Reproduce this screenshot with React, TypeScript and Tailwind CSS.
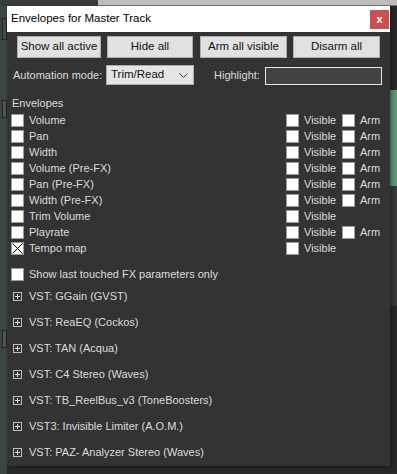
const font = { fontFamily: '"Liberation Sans", Arial, sans-serif' };

const envelopes = [
  { name: "Volume", arm: true },
  { name: "Pan", arm: true },
  { name: "Width", arm: true },
  { name: "Volume (Pre-FX)", arm: true },
  { name: "Pan (Pre-FX)", arm: true },
  { name: "Width (Pre-FX)", arm: true },
  { name: "Trim Volume", arm: false },
  { name: "Playrate", arm: true },
  { name: "Tempo map", arm: false, checked: true },
];

const plugins = [
  "VST: GGain (GVST)",
  "VST: ReaEQ (Cockos)",
  "VST: TAN (Acqua)",
  "VST: C4 Stereo (Waves)",
  "VST: TB_ReelBus_v3 (ToneBoosters)",
  "VST3: Invisible Limiter (A.O.M.)",
  "VST: PAZ- Analyzer Stereo (Waves)",
];

const Check = ({ checked = false }: { checked?: boolean }) => (
  <div className="w-[13px] h-[13px] shrink-0 bg-white border border-[#9a9a9a] flex items-center justify-center">
    {checked && (
      <svg width="11" height="11" viewBox="0 0 11 11">
        <path d="M0.5 0.5 L10.5 10.5 M10.5 0.5 L0.5 10.5" stroke="#000" strokeWidth="1" />
      </svg>
    )}
  </div>
);

const Button = ({ label, w }: { label: string; w: string }) => (
  <button className={`${w} h-[22px] shrink-0 whitespace-nowrap bg-[#e1e1e1] border border-[#adadad] text-[11.5px] text-[#111] flex items-center justify-center`}>
    {label}
  </button>
);

const App = () => {
  return (
    <div className="w-[397px] h-[474px] bg-[#2a2a2a] relative overflow-hidden" style={font}>
      {/* desktop behind the dialog */}
      <div className="absolute left-0 top-0 w-[397px] h-[6px] bg-[#bdbdbd] border-b border-[#777]" />
      <div className="absolute left-0 top-0 w-[98px] h-[6px] bg-[#3a3a3a]" />
      <div className="absolute left-0 top-[6px] w-[7px] h-[468px] bg-[#3c4640]" />
      <div className="absolute left-[2px] top-[18px] w-[5px] h-[22px] bg-[#4a4a4a] border border-[#222]" />
      <div className="absolute left-[2px] top-[100px] w-[5px] h-[18px] bg-[#555] border border-[#222]" />
      <div className="absolute left-[2px] top-[330px] w-[5px] h-[18px] bg-[#555] border border-[#222]" />
      <div className="absolute left-[390px] top-[90px] w-[7px] h-[96px] bg-[#5b9c74]" />
      <div className="absolute left-[390px] top-[186px] w-[7px] h-[120px] bg-[#3a3a3a]" />

      <div className="absolute left-[7px] top-[6px] w-[383px] h-[460px] flex flex-col shadow-[2px_2px_4px_rgba(0,0,0,0.4)]">
        {/* title bar */}
        <div className="h-[26px] bg-white flex items-center justify-between pl-[4px] pr-[1px]">
          <span className="text-[11.5px] text-black">Envelopes for Master Track</span>
          <div className="w-[19px] h-[19px] bg-[#c75050] flex items-center justify-center text-white text-[11px] font-bold leading-none">
            x
          </div>
        </div>

        {/* body */}
        <div className="flex-1 bg-[#333333] flex flex-col text-[11px] text-[#dcdcdc] whitespace-nowrap">
          <div className="flex pl-[10px] pt-[4px] gap-[6px]">
            <Button label="Show all active" w="w-[84px]" />
            <Button label="Hide all" w="w-[86px]" />
            <Button label="Arm all visible" w="w-[87px] ml-[1px]" />
            <Button label="Disarm all" w="w-[87px]" />
          </div>

          <div className="flex items-center h-[20px] mt-[7px]">
            <span className="pl-[6px] w-[99px] shrink-0">Automation mode:</span>
            <div className="w-[88px] h-[20px] shrink-0 bg-[#e5e5e5] border border-[#acacac] flex items-center justify-between pl-[4px] pr-[5px] text-[11.5px] text-[#111]">
              <span>Trim/Read</span>
              <svg width="9" height="5" viewBox="0 0 9 5">
                <path d="M0.5 0.5 L4.5 4.5 L8.5 0.5" stroke="#333" fill="none" />
              </svg>
            </div>
            <span className="ml-[20px] w-[51px] shrink-0">Highlight:</span>
            <div className="w-[117px] h-[18px] shrink-0 mt-[2px] bg-[#434343] border border-[#e8e8e8]" />
          </div>

          <div className="h-[16px] mt-[11px] pl-[5px] leading-[14px]">Envelopes</div>

          <div className="flex flex-col">
            {envelopes.map((e) => (
              <div key={e.name} className="h-[16px] flex items-center">
                <div className="w-[279px] flex items-center pl-[4px] gap-[5px]">
                  <Check checked={e.checked} />
                  <span>{e.name}</span>
                </div>
                <div className="w-[56px] flex items-center gap-[5px]">
                  <Check />
                  <span>Visible</span>
                </div>
                {e.arm && (
                  <div className="flex items-center gap-[5px]">
                    <Check />
                    <span>Arm</span>
                  </div>
                )}
              </div>
            ))}
          </div>

          <div className="h-[16px] mt-[10px] flex items-center pl-[4px] gap-[5px]">
            <Check />
            <span>Show last touched FX parameters only</span>
          </div>

          <div className="flex flex-col mt-[1px]">
            {plugins.map((p) => (
              <div key={p} className="h-[26px] flex items-center pl-[6px] gap-[7px]">
                <div className="w-[9px] h-[9px] border border-[#bdbdbd] flex items-center justify-center">
                  <svg width="7" height="7" viewBox="0 0 7 7">
                    <path d="M1 3.5 H6 M3.5 1 V6" stroke="#dcdcdc" strokeWidth="1" />
                  </svg>
                </div>
                <span>{p}</span>
              </div>
            ))}
          </div>
        </div>
      </div>
    </div>
  );
};

export default App;
